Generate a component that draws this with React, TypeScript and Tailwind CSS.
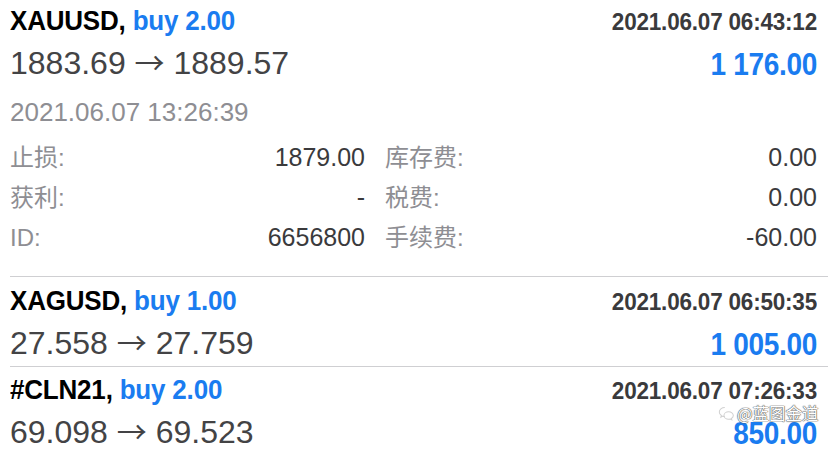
import React from "react";

const BLUE = "text-[#1a7cf0]";

function Header({ symbol, lots, time, from, to, profit }: { symbol: string; lots: string; time: string; from: string; to: string; profit: string }) {
  return (
    <div className="pl-[10px] pr-[11px]">
      <div className="flex items-baseline justify-between h-[40px]">
        <span className="inline-block scale-y-[1.08] text-[26px] leading-[40px] font-bold text-black tracking-[-0.2px]">
          {symbol}, <span className={BLUE}>buy {lots}</span>
        </span>
        <span className="inline-block scale-y-[1.08] text-[22.5px] leading-[40px] font-bold text-[#3a3a3c] tracking-[-0.2px]">{time}</span>
      </div>
      <div className="flex items-baseline justify-between h-[42px]">
        <span className="text-[32px] leading-[42px] text-[#434345] whitespace-nowrap">
          {from} <span className="font-['Noto_Sans_CJK_SC',sans-serif] text-[30px]">→</span> {to}
        </span>
        <span className={`inline-block scale-y-[1.14] text-[28px] leading-[42px] font-bold ${BLUE} tracking-[-0.3px]`}>{profit}</span>
      </div>
    </div>
  );
}

function Detail({ label, value }: { label: string; value: string }) {
  return (
    <div className="flex justify-between items-baseline h-[40px] leading-[40px]">
      <span className="text-[24px] text-[#8e8e93]">{label}:</span>
      <span className="text-[25px] text-[#3a3a3c]">{value}</span>
    </div>
  );
}

export default function App() {
  return (
    <div className="relative w-[828px] h-[451px] overflow-hidden bg-white font-['Liberation_Sans','Noto_Sans_CJK_SC',sans-serif]">
      <Header symbol="XAUUSD" lots="2.00" time="2021.06.07 06:43:12" from="1883.69" to="1889.57" profit="1 176.00" />
      <div className="pl-[10px] pr-[11px]">
        <div className="mt-[10px] h-[40px] leading-[40px] text-[26px] text-[#8e8e93]">2021.06.07 13:26:39</div>
        <div className="mt-[5px] flex">
          <div className="w-[355px]">
            <Detail label="止损" value="1879.00" />
            <Detail label="获利" value="-" />
            <Detail label="ID" value="6656800" />
          </div>
          <div className="flex-1 ml-[20px]">
            <Detail label="库存费" value="0.00" />
            <Detail label="税费" value="0.00" />
            <Detail label="手续费" value="-60.00" />
          </div>
        </div>
      </div>
      <div className="mt-[19px] ml-[10px] h-px bg-[#cfcfd2]" />
      <div className="mt-[3px]">
        <Header symbol="XAGUSD" lots="1.00" time="2021.06.07 06:50:35" from="27.558" to="27.759" profit="1 005.00" />
      </div>
      <div className="mt-[4px] ml-[10px] h-px bg-[#cfcfd2]" />
      <div className="mt-[2px]">
        <Header symbol="#CLN21" lots="2.00" time="2021.06.07 07:26:33" from="69.098" to="69.523" profit="850.00" />
      </div>

      <div className="absolute left-[718px] top-[402px] flex items-center gap-[2px] whitespace-nowrap">
        <svg width="17" height="16" viewBox="0 0 20 18" fill="none" stroke="#d0d0d0" strokeWidth="1.2">
          <path d="M8 2.5c-3.6 0-6.5 2.4-6.5 5.3 0 1.7 1 3.2 2.5 4.1l-.6 2 2.3-1.2c.7.2 1.5.3 2.3.3" />
          <path d="M12.5 7.5c-3 0-5.5 2-5.5 4.4s2.5 4.4 5.5 4.4c.6 0 1.2-.1 1.8-.3l1.9 1-.5-1.6c1.4-.8 2.3-2.1 2.3-3.5 0-2.4-2.5-4.4-5.5-4.4z" />
        </svg>
        <span className="text-[16.5px] leading-[22px] text-white font-['Noto_Sans_CJK_SC',sans-serif] [text-shadow:0_0_1px_#555,0_0_1px_#555,0_0_1px_#555]">
          @蓝图金道
        </span>
      </div>
    </div>
  );
}
